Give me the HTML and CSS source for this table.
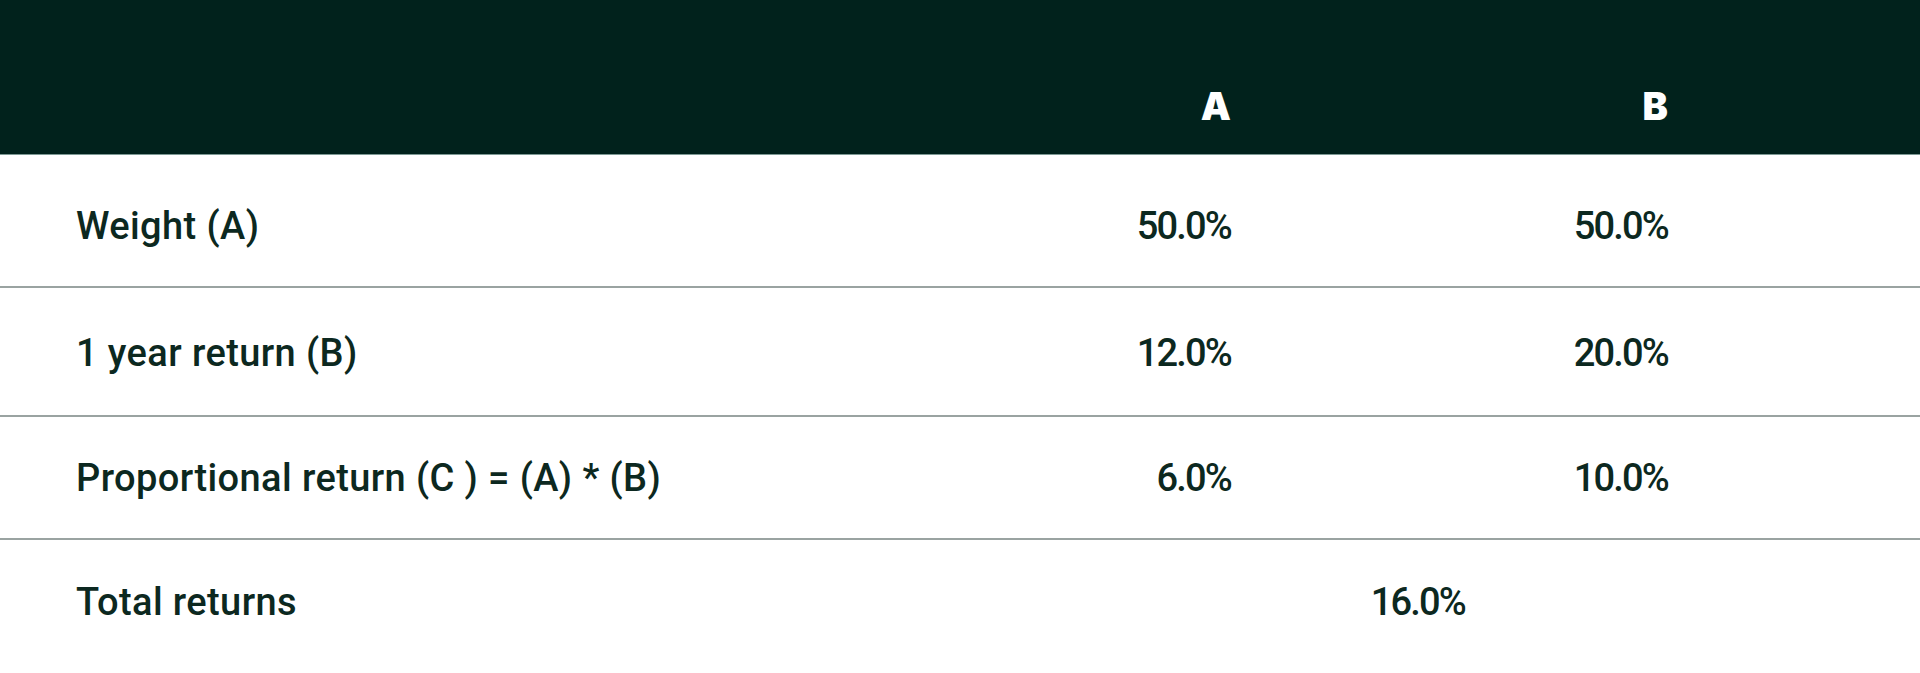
FILE: index.html
```html
<!DOCTYPE html>
<html lang="en">
<head>
<meta charset="utf-8">
<title>Portfolio returns</title>
<link rel="stylesheet" href="styles.css">
</head>
<body>
<table class="returns">
  <colgroup>
    <col class="col-label">
    <col class="col-val">
    <col class="col-val">
    <col class="col-rest">
  </colgroup>
  <thead>
    <tr class="head-row">
      <th class="label"></th>
      <th class="val">A</th>
      <th class="val">B</th>
      <th></th>
    </tr>
  </thead>
  <tbody>
    <tr class="row row-1">
      <td class="label">Weight (A)</td>
      <td class="val">50.0%</td>
      <td class="val">50.0%</td>
      <td></td>
    </tr>
    <tr class="row row-2">
      <td class="label">1 year return (B)</td>
      <td class="val">12.0%</td>
      <td class="val">20.0%</td>
      <td></td>
    </tr>
    <tr class="row row-3">
      <td class="label">Proportional return (C ) = (A) * (B)</td>
      <td class="val">6.0%</td>
      <td class="val">10.0%</td>
      <td></td>
    </tr>
    <tr class="row row-total">
      <td class="label">Total returns</td>
      <td class="val total" colspan="2">16.0%</td>
      <td></td>
    </tr>
  </tbody>
</table>
</body>
</html>
```

FILE: styles.css
```css
html, body {
  margin: 0;
  padding: 0;
  background: #ffffff;
}

.returns {
  width: 1920px;
  table-layout: fixed;
  border-collapse: collapse;
  color: #0c2820;
}

.col-label { width: 794px; }
.col-val { width: 437px; }
.col-rest { width: 252px; }

.returns th,
.returns td {
  padding: 0;
  vertical-align: middle;
}

.head-row {
  height: 154px;
  background: #01221c;
  border-bottom: 1px solid #7d9994;
}

.head-row th {
  color: #ffffff;
  font-family: "Inter", "Liberation Sans", sans-serif;
  font-weight: 900;
  font-size: 38px;
  text-align: right;
  padding-top: 58px;
}

.row td {
  font-size: 38px;
  font-family: "Roboto", "Liberation Sans", sans-serif;
  font-weight: 500;
}

.row .label {
  padding-left: 76px;
  text-align: left;
  letter-spacing: 0.4px;
}

.row .val {
  text-align: right;
  letter-spacing: -1.8px;
}

.row-1 { height: 133px; border-bottom: 2px solid #9aa3a1; }
.row-1 td { padding-top: 12px; }
.row-2 { height: 129px; border-bottom: 2px solid #9aa3a1; }
.row-2 td { padding-top: 2px; }
.row-3 { height: 123px; border-bottom: 2px solid #9aa3a1; }
.row-total { height: 134px; }
.row-total td { padding-bottom: 10px; }

.row .total {
  padding-right: 203px;
}
```
